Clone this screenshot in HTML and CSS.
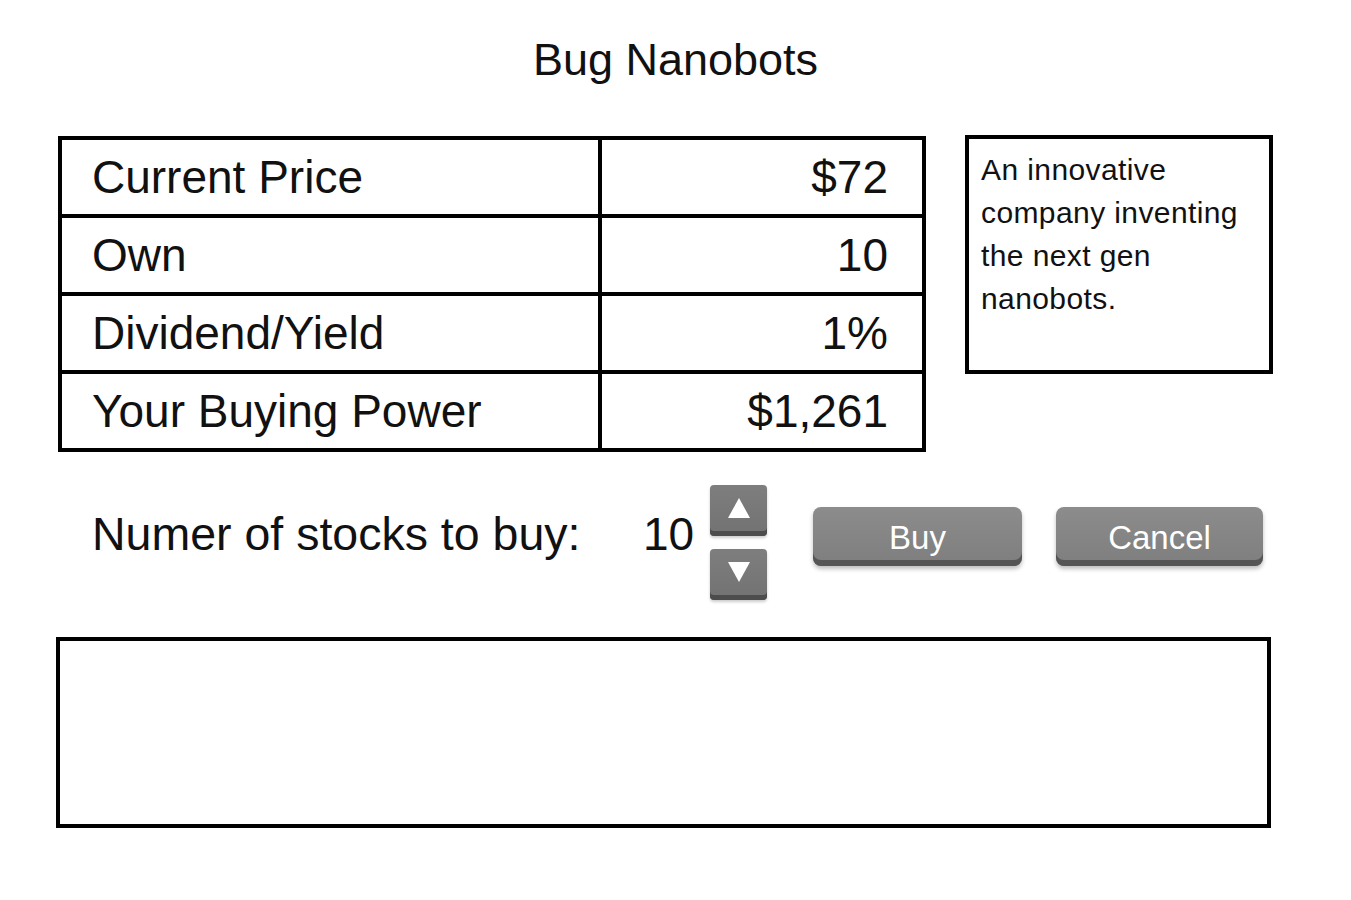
FILE: index.html
```html
<!DOCTYPE html>
<html lang="en">
<head>
<meta charset="utf-8">
<title>Bug Nanobots</title>
<link rel="stylesheet" href="styles.css">
</head>
<body>
<div class="page">
  <h1 class="title">Bug Nanobots</h1>
  <div class="top">
    <div class="stats">
      <div class="cell label">Current Price</div><div class="cell value">$72</div>
      <div class="cell label">Own</div><div class="cell value">10</div>
      <div class="cell label">Dividend/Yield</div><div class="cell value">1%</div>
      <div class="cell label">Your Buying Power</div><div class="cell value">$1,261</div>
    </div>
    <div class="desc">An innovative company inventing the next gen nanobots.</div>
  </div>
  <div class="order">
    <span class="order-label">Numer of stocks to buy:</span>
    <span class="qty">10</span>
    <div class="spinner">
      <button class="spin" type="button" aria-label="Increase"><svg width="24" height="22" viewBox="0 0 24 22"><polygon points="12,1 23,21 1,21" fill="#fff"/></svg></button>
      <button class="spin" type="button" aria-label="Decrease"><svg width="24" height="22" viewBox="0 0 24 22"><polygon points="1,1 23,1 12,21" fill="#fff"/></svg></button>
    </div>
    <button class="btn buy" type="button">Buy</button>
    <button class="btn cancel" type="button">Cancel</button>
  </div>
  <div class="log"></div>
</div>
</body>
</html>
```

FILE: styles.css
```css
body {
  margin: 0;
  background: #fff;
  color: #111;
  font-family: "Liberation Sans", Arial, sans-serif;
}

.page {
  width: 1351px;
  padding-top: 35px;
}

.title {
  margin: 0;
  font-size: 45px;
  font-weight: 400;
  line-height: 50px;
  text-align: center;
}

.top {
  display: flex;
  align-items: flex-start;
  gap: 39px;
  margin: 51px 0 0 58px;
}

.stats {
  display: grid;
  grid-template-columns: 540px 324px;
  border-top: 4px solid #000;
  border-left: 4px solid #000;
}

.cell {
  height: 78px;
  box-sizing: border-box;
  border-right: 4px solid #000;
  border-bottom: 4px solid #000;
  display: flex;
  align-items: center;
  font-size: 46px;
}

.label {
  padding-left: 30px;
}

.value {
  justify-content: flex-end;
  padding-right: 34px;
}

.desc {
  width: 308px;
  height: 239px;
  box-sizing: border-box;
  margin-top: -1px;
  border: 4px solid #000;
  padding: 9px 6px 0 12px;
  font-size: 30px;
  line-height: 43px;
  letter-spacing: 0.4px;
}

.order {
  display: flex;
  align-items: flex-start;
  margin: 33px 0 0 92px;
}

.order-label {
  width: 551px;
  margin-top: 23px;
  font-size: 46.5px;
  line-height: 52px;
}

.qty {
  width: 67px;
  margin-top: 23px;
  font-size: 46px;
  line-height: 52px;
}

.spinner {
  display: flex;
  flex-direction: column;
  gap: 13px;
  width: 57px;
}

.spin {
  width: 57px;
  height: 51px;
  padding: 0 0 5px;
  border: none;
  border-radius: 4px;
  background: linear-gradient(#7e7e7e, #727272);
  box-shadow: inset 0 -5px 0 #4c4c4c, 0 2px 3px rgba(0, 0, 0, 0.2);
  display: flex;
  align-items: center;
  justify-content: center;
}

.spin svg {
  display: block;
}

.btn {
  margin-top: 22px;
  height: 59px;
  padding: 2px 0 0;
  border: none;
  border-radius: 8px;
  background: linear-gradient(#8c8c8c, #7e7e7e);
  box-shadow: inset 0 -6px 0 #555, 0 3px 4px rgba(0, 0, 0, 0.25);
  color: #fff;
  font-family: "Liberation Sans", Arial, sans-serif;
  font-size: 33px;
}

.buy {
  width: 209px;
  margin-left: 46px;
}

.cancel {
  width: 207px;
  margin-left: 34px;
}

.log {
  width: 1215px;
  height: 191px;
  box-sizing: border-box;
  margin: 37px 0 0 56px;
  border: 4px solid #000;
}
```
